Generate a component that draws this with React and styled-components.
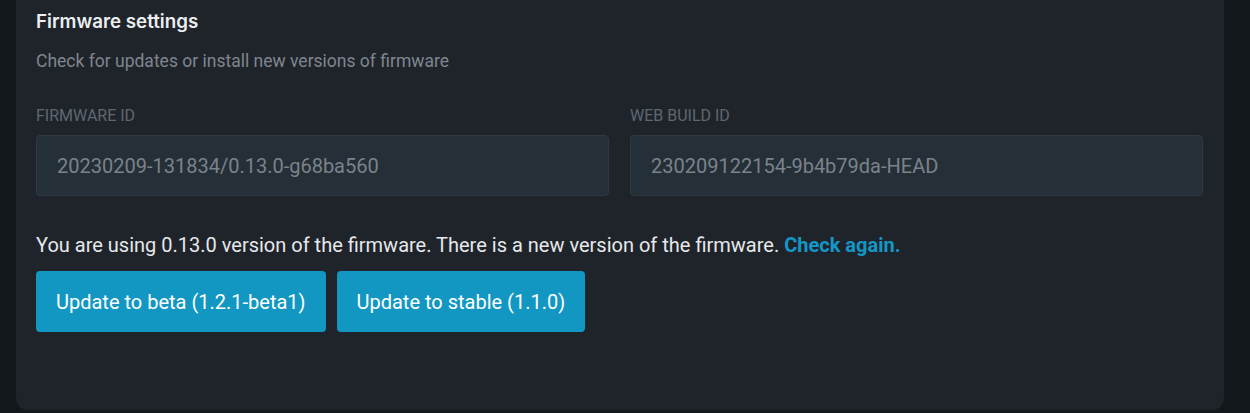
import React from 'react';
import styled, { createGlobalStyle } from 'styled-components';

const GlobalStyle = createGlobalStyle`
	html, body {
		margin: 0;
		padding: 0;
		background: #13181d;
	}
	body {
		font-family: Roboto, "Liberation Sans", sans-serif;
	}
`;

const Page = styled.div`
	height: 413px;
	padding: 0 26px 3px 16px;
	box-sizing: border-box;
	display: flex;
	flex-direction: column;
	justify-content: flex-end;
`;

const Card = styled.section`
	background: #1f242b;
	border-radius: 0 0 12px 12px;
	padding: 10px 21px 0 20px;
	height: 410px;
	box-sizing: border-box;
`;

const Title = styled.h2`
	margin: 0;
	font-family: Inter, Roboto, sans-serif;
	font-weight: 600;
	font-size: 18.75px;
	line-height: 24px;
	color: #eceef0;
`;

const Subtitle = styled.p`
	margin: 15px 0 0;
	font-size: 17.5px;
	line-height: 24px;
	color: #7f868e;
`;

const Fields = styled.div`
	display: grid;
	grid-template-columns: 1fr 1fr;
	gap: 21px;
	margin-top: 33px;
`;

const Field = styled.label`
	display: flex;
	flex-direction: column;
	gap: 9px;
`;

const Label = styled.span`
	font-size: 16px;
	line-height: 20px;
	text-transform: uppercase;
	color: #5f6770;
`;

const Input = styled.input`
	height: 61px;
	box-sizing: border-box;
	background: #252f38;
	border: 1px solid #2f3944;
	border-radius: 4px;
	padding: 0 20px;
	font-family: Roboto, sans-serif;
	font-size: 20px;
	color: #7b8289;
	outline: none;
`;

const Message = styled.p`
	margin: 35px 0 0;
	font-size: 20px;
	line-height: 28px;
	color: #e6e8ea;
`;

const Link = styled.a`
	color: #1497c6;
	font-weight: 700;
	text-decoration: none;
	cursor: pointer;
`;

const Actions = styled.div`
	display: flex;
	gap: 11px;
	margin-top: 12px;
`;

const Button = styled.button`
	height: 61px;
	padding: 0 20px;
	border: none;
	border-radius: 4px;
	background: #1297c3;
	color: #ffffff;
	font-family: Roboto, sans-serif;
	font-size: 20px;
	cursor: pointer;
`;

export default function App() {
	return (
		<>
			<GlobalStyle />
			<Page>
				<Card>
					<Title>Firmware settings</Title>
					<Subtitle>Check for updates or install new versions of firmware</Subtitle>
					<Fields>
						<Field>
							<Label>Firmware ID</Label>
							<Input readOnly value="20230209-131834/0.13.0-g68ba560" />
						</Field>
						<Field>
							<Label>Web build ID</Label>
							<Input readOnly value="230209122154-9b4b79da-HEAD" />
						</Field>
					</Fields>
					<Message>
						You are using 0.13.0 version of the firmware. There is a new version of the firmware.{' '}
						<Link>Check again.</Link>
					</Message>
					<Actions>
						<Button>Update to beta (1.2.1-beta1)</Button>
						<Button>Update to stable (1.1.0)</Button>
					</Actions>
				</Card>
			</Page>
		</>
	);
}
